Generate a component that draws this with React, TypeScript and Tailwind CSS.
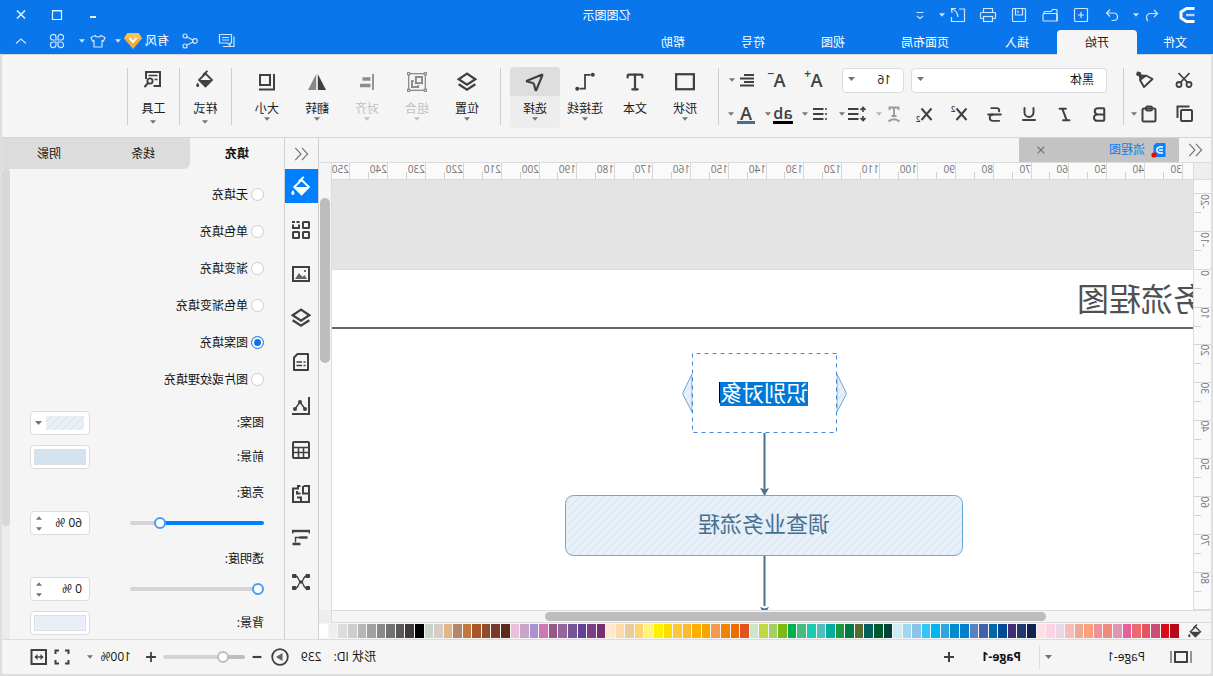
import React, { useState } from "react";
import { Bold, Italic, MousePointer2, Strikethrough, Type, Underline } from "lucide-react";

const menuTabs = ["文件", "开始", "插入", "页面布局", "视图", "符号", "帮助"];
const panelTabs = ["填充", "线条", "阴影"];
const fillModes = ["无填充", "单色填充", "渐变填充", "单色渐变填充", "图案填充", "图片或纹理填充"];

const palette = [
  "#b70817", "#da0a1c", "#c94f76", "#e75460", "#ea6a70", "#e8609b", "#e197b4", "#ee8a82", "#f19099", "#ffa07a",
  "#f0a891", "#f5bebb", "#ebd5e9", "#fed4e4", "#fde0e6", "#0e234d", "#23366f", "#412d75", "#054896", "#0068a6",
  "#4061ac", "#5781c1", "#0080cb", "#008bcf", "#2ea7e0", "#00b6f0", "#31c5f8", "#8bc3eb", "#9fd8f0", "#cfebf6",
  "#004437", "#005830", "#00605c", "#556b2f", "#007a43", "#1c963f", "#00ad9f", "#50bdbf", "#19ccb0", "#4aba80",
  "#00af50", "#7eb911", "#a4cf62", "#c0d842", "#cde6c7", "#e3511f", "#ec6c00", "#f08300", "#f39a52", "#f3a700",
  "#ffaf00", "#feb933", "#fcc838", "#ffdc00", "#fff000", "#fff280", "#ffd371", "#eacc9a", "#ffdbaa", "#fde8d0",
  "#763071", "#7e3e85", "#634198", "#745399", "#95669c", "#9a5687", "#cb79ae", "#aa91d0", "#c6a5c9", "#ebc0dc",
  "#5c2a1b", "#773a2c", "#934b28", "#a85628", "#c1773f", "#b4866b", "#deb887", "#d5ccc7", "#c9d4cb", "#000000",
  "#3e3a39", "#595757", "#727171", "#898989", "#9fa0a0", "#b5b6b6", "#cccdcd", "#dcdcdc", "#eeeeee", "#ffffff",
];

// Pixels covered by ten ruler units
const RULER_STEP = 37.85;
const stepSize = (i: number) => Math.round((i + 1) * RULER_STEP) - Math.round(i * RULER_STEP);

type IconProps = { size?: number; sw?: number; className?: string; children: React.ReactNode };

function Icon({ size = 18, sw = 2, className = "", children }: IconProps) {
  return (
    <svg
      width={size}
      height={size}
      viewBox="0 0 18 18"
      fill="none"
      stroke="currentColor"
      strokeWidth={sw}
      className={`shrink-0 ${className}`}
      aria-hidden="true"
    >
      {children}
    </svg>
  );
}

function Caret({ className = "", up = false }: { className?: string; up?: boolean }) {
  return (
    <svg width="7" height="4" viewBox="0 0 7 4" className={`shrink-0 ${className}`} aria-hidden="true">
      <path d={up ? "M0 4h7L3.5 0z" : "M0 0h7L3.5 4z"} fill="currentColor" />
    </svg>
  );
}

function BucketIcon({ size = 18 }: { size?: number }) {
  return (
    <Icon size={size} sw={1.8}>
      <path d="M6.5 .8 11 5" />
      <path d="M8.5 3.5 15 10 8.5 16.5 2 10z" />
      <path d="M2.5 10h12l-6 6z" fill="currentColor" stroke="none" />
      <path d="M16.2 12.5c1 1.4 1.6 2.2 1.6 3a1.5 1.5 0 0 1-3 0c0-.8.6-1.6 1.4-3z" fill="currentColor" stroke="none" />
    </Icon>
  );
}

function LayersIcon() {
  return (
    <Icon size={20}>
      <path d="M9 1.5 16.500 6.500 9 11.500 1.500 6.500z" />
      <path d="M1.500 11 9 16l7.500-5" />
    </Icon>
  );
}

function ScriptIcon({ y }: { y: number }) {
  return (
    <Icon>
      <path d="M1.500 3.500 11.500 15M11.500 3.500 1.500 15" />
      <text x="12.500" y={y} fontSize="8" fontWeight="600" fill="currentColor" stroke="none">2</text>
    </Icon>
  );
}

function CollapseIcon() {
  return (
    <Icon size={16} sw={1.3} className="text-neutral-500">
      <path d="M8 2 1.500 9 8 16M15.500 2 9 9l6.500 7" />
    </Icon>
  );
}

type ButtonProps = { label: string; className?: string; children: React.ReactNode };

function IconButton({ label, className = "", children }: ButtonProps) {
  return (
    <button aria-label={label} className={`flex items-center justify-center ${className}`}>
      {children}
    </button>
  );
}

function DropButton({ label, className = "", children }: ButtonProps) {
  return (
    <button aria-label={label} className={`flex h-full w-[37px] items-center gap-[2px] ${className}`}>
      <span className="flex w-5 justify-center">{children}</span>
      <Caret className="w-[6px] opacity-70" />
    </button>
  );
}

function Divider() {
  return <div className="mt-[13px] h-[57px] w-px shrink-0 bg-[#cfcfcf]" />;
}

type BigButtonProps = {
  label: string;
  active?: boolean;
  disabled?: boolean;
  tall?: boolean;
  caret?: boolean;
  children: React.ReactNode;
};

function BigButton({ label, active, disabled, tall, caret = true, children }: BigButtonProps) {
  return (
    <button
      disabled={disabled}
      className={`mt-3 flex h-[61px] shrink-0 flex-col items-center rounded-sm ${tall ? "w-[51px]" : "w-[50px]"} ${
        active ? "bg-[#ededed]" : ""
      } ${disabled ? "text-[#c0c0c0]" : "text-[#202020]"}`}
    >
      <span
        className={`flex h-[29px] w-full justify-center rounded-t-sm ${tall ? "pt-[3px]" : "items-center"} ${
          active ? "bg-[#dedede]" : ""
        } ${disabled ? "text-[#8c8c8c]" : "text-[#404040]"}`}
      >
        {children}
      </span>
      <span className="mt-[5px] leading-4">{label}</span>
      {caret && <Caret className={`w-[6px] ${tall ? "mt-[3px]" : ""} ${disabled ? "" : "text-neutral-500"}`} />}
    </button>
  );
}

function TitleBar() {
  return (
    <div className="grid h-[30px] grid-cols-[1fr_auto_1fr] items-center">
      <div className="flex items-center text-white/80">
        <div className="ml-1 flex w-11 justify-center text-white">
          <Icon size={18} sw={3}>
            <path d="M1.500 2.500h8L15 6v6l-5.500 3.500h-8" strokeLinejoin="round" />
            <path d="M1.500 9H10" strokeWidth="2.400" opacity=".7" />
          </Icon>
        </div>
        <button aria-label="撤销" className="ml-1 flex w-[33px] items-center gap-1">
          <Icon size={18} sw={1.2}>
            <path d="M7 4 3.500 7.500 7 11M3.500 7.500H10c3 0 4.500 1.500 4.500 4 0 1.500-.5 2.500-1.500 3.500" />
          </Icon>
          <Caret className="w-[6px]" />
        </button>
        <IconButton label="恢复" className="w-[31px]">
          <Icon sw={1.2}>
            <path d="M11 3.500 14.500 7 11 10.500M14.500 7H8c-3 0-4.500 1.500-4.500 4 0 2 1.500 3.500 4 3.500h2" />
          </Icon>
        </IconButton>
        <IconButton label="新建" className="w-[31px]">
          <Icon sw={1.2}>
            <rect x="2.500" y="2.500" width="13" height="13" rx="1" />
            <path d="M9 6v6M6 9h6" />
          </Icon>
        </IconButton>
        <IconButton label="打开" className="w-[31px]">
          <Icon sw={1.2}>
            <path d="M2 15V4.500A1 1 0 0 1 3 3.500h3.500l1.500 2h6a1 1 0 0 1 1 1V8" />
            <path d="M2 15V9a1.500 1.500 0 0 1 1.500-1.500h11A1.500 1.500 0 0 1 16 9v5a1 1 0 0 1-1 1z" />
          </Icon>
        </IconButton>
        <IconButton label="保存" className="w-[31px]">
          <Icon sw={1.2}>
            <rect x="2.500" y="2.500" width="13" height="13" rx="1" />
            <path d="M5.500 2.500V9h7V2.500M10 4.500v2.500" />
          </Icon>
        </IconButton>
        <IconButton label="打印" className="w-[31px]">
          <Icon sw={1.2}>
            <path d="M4.500 6.500V2.500h9v4M4.500 12.500h-2a1 1 0 0 1-1-1v-4a1 1 0 0 1 1-1h13a1 1 0 0 1 1 1v4a1 1 0 0 1-1 1h-2" />
            <rect x="4.500" y="10.500" width="9" height="5" />
          </Icon>
        </IconButton>
        <button aria-label="导出" className="ml-[6px] flex items-center gap-1">
          <Icon sw={1.2}>
            <path d="M8 3H2.500v12.500h13V11M11 2.500l4.500 0-.5 4.500M15 3c-3.500 1-5.500 3.500-6 8" />
          </Icon>
          <Caret className="w-[6px]" />
        </button>
        <IconButton label="自定义快速访问" className="ml-2 w-[22px]">
          <Icon sw={1.2}>
            <path d="M5.500 6.500h7M6 10l3 2.500 3-2.500" />
          </Icon>
        </IconButton>
      </div>
      <h1 className="pt-px text-white">亿图图示</h1>
      <div className="flex justify-end pr-[3px] text-white/90">
        <IconButton label="最小化" className="w-9">
          <Icon sw={2}><path d="M6 11h6" /></Icon>
        </IconButton>
        <IconButton label="最大化" className="w-9">
          <Icon sw={1.2}><path d="M4.500 4.500h9v9h-9zM4 5h10" /></Icon>
        </IconButton>
        <IconButton label="关闭" className="w-9">
          <Icon sw={1.6}><path d="m5 4.500 8 8M13 4.500l-8 8" /></Icon>
        </IconButton>
      </div>
    </div>
  );
}

function MenuBar() {
  const [tab, setTab] = useState("开始");
  return (
    <div className="flex h-6">
      <nav className="flex">
        {menuTabs.map((name, i) => (
          <button
            key={name}
            onClick={() => setTab(name)}
            className={`h-[25px] pt-px leading-6 ${i === 0 ? "px-[26px]" : "px-7"} ${
              tab === name ? "relative z-10 rounded-t-sm bg-[#f5f5f5] text-[#202020]" : "text-white"
            }`}
          >
            {name}
          </button>
        ))}
      </nav>
      <div className="ml-auto flex h-[22px] items-center pr-[3px] text-white/80">
        <IconButton label="评论" className="w-[37px]">
          <Icon sw={1.2}>
            <path d="M4.500 2.500h12v8.500h-8L6 13.500V11H4.500zM7 5.500h7M7 8h7M2 4.500v10h11" />
          </Icon>
        </IconButton>
        <IconButton label="分享" className="w-[37px]">
          <Icon sw={1.2}>
            <circle cx="4" cy="9" r="2.300" />
            <circle cx="14" cy="4" r="2" />
            <circle cx="14" cy="14" r="2" />
            <path d="m6 8 6-3M6 10l6 3" />
          </Icon>
        </IconButton>
        <button className="ml-[2px] flex items-center text-white">
          有风
          <svg width="20" height="18" viewBox="0 0 20 18" className="ml-[2px]" aria-hidden="true">
            <path d="M4.500 1h11L19 6.500 10 17 1 6.500z" fill="#f5ad3a" />
            <path d="M4.500 1h11L19 6.500H1z" fill="#fabf55" />
            <path d="M6.500 6 10 10l3.500-4" fill="none" stroke="#fff" strokeWidth="2" />
          </svg>
          <Caret className="ml-[2px] w-[6px] opacity-80" />
        </button>
        <button aria-label="主题" className="ml-2 flex items-center gap-1">
          <Icon sw={1.2}>
            <path d="M6 3.500 2 5.500l1.500 3.500 1.500-.5V15h8V8.500l1.500.5L16 5.500 12 3.500c-.5 2-5.500 2-6 0z" />
          </Icon>
          <Caret className="w-[6px]" />
        </button>
        <IconButton label="应用" className="ml-1 w-9">
          <Icon sw={1.2}>
            <path d="M8 8V5.200A2.800 2.800 0 1 0 5.200 8zM10 8h2.800A2.800 2.800 0 1 0 10 5.200zM8 10H5.200A2.800 2.800 0 1 0 8 12.800zM10 10v2.800A2.800 2.800 0 1 0 12.800 10z" />
          </Icon>
        </IconButton>
        <IconButton label="收起功能区" className="w-9">
          <Icon sw={1.2}><path d="m4 11.500 5-4.500 5 4.500" /></Icon>
        </IconButton>
      </div>
    </div>
  );
}

function Toolbar() {
  return (
    <div className="flex h-[84px] shrink-0 overflow-hidden border-y border-[#d4d4d4] text-[#404040]">
      <div className="ml-[9px] flex w-[78px] shrink-0 flex-col pt-2">
        <div className="flex h-[34px]">
          <IconButton label="剪切" className="w-9">
            <Icon sw={1.8}>
              <circle cx="4" cy="13.500" r="2.500" />
              <circle cx="14" cy="13.500" r="2.500" />
              <path d="M3.500 2 12.500 11.500M14.500 2 5.500 11.500" />
            </Icon>
          </IconButton>
          <IconButton label="格式刷" className="w-11">
            <Icon sw={1.9}>
              <path d="M1.500 8 8 4.500l6 4.500-4 7z" strokeLinejoin="round" />
              <path d="M7.500 4 14.500 9.500 15 5.500 18 4 17 .5 13.500 1 12.500 3.500z" fill="currentColor" stroke="none" />
            </Icon>
          </IconButton>
        </div>
        <div className="flex h-[34px]">
          <IconButton label="复制" className="w-9">
            <Icon>
              <rect x="2" y="5" width="11" height="11" rx="1" />
              <path d="M4.500 1.500H16.500V13" />
            </Icon>
          </IconButton>
          <DropButton label="粘贴" className="ml-2">
            <Icon>
              <rect x="2.500" y="3.500" width="13" height="13" rx="1.500" />
              <rect x="6" y="1.500" width="6" height="4" rx="1.500" />
            </Icon>
          </DropButton>
        </div>
      </div>
      <Divider />
      <div className="ml-[6px] flex shrink-0 flex-col pt-2">
        <div className="flex h-[34px] items-center pl-[10px]">
          <div className="relative w-[196px]">
            <select aria-label="字体" className="h-[25px] w-full appearance-none rounded-sm border border-[#dcdce0] bg-white px-3 text-[#111]">
              <option>黑体</option>
            </select>
            <Caret className="pointer-events-none absolute top-[9px] right-[6px] text-neutral-500" />
          </div>
          <div className="relative ml-[7px] w-[62px]">
            <select aria-label="字号" className="h-[25px] w-full appearance-none rounded-sm border border-[#dcdce0] bg-white px-3 text-[#111]">
              <option>16</option>
            </select>
            <Caret className="pointer-events-none absolute top-[9px] right-[6px] text-neutral-500" />
          </div>
          <button aria-label="增大字号" className="relative ml-[7px] w-[37px] text-lg leading-6 font-semibold">
            A<sup className="absolute top-0 right-[6px] text-xs leading-3">+</sup>
          </button>
          <button aria-label="减小字号" className="relative w-[37px] text-lg leading-6 font-semibold">
            A<sup className="absolute top-0 right-[6px] text-xs leading-3">−</sup>
          </button>
          <DropButton label="对齐方式" className="ml-1">
            <Icon sw={1.8}><path d="M2 4h10M2 7.500h14M2 11h10M2 14.500h14" /></Icon>
          </DropButton>
        </div>
        <div className="flex h-[34px] items-center">
          <IconButton label="加粗" className="w-[35px]"><Bold size={19} strokeWidth={2.6} /></IconButton>
          <IconButton label="斜体" className="w-[35px]"><Italic size={17} strokeWidth={2.8} /></IconButton>
          <IconButton label="下划线" className="w-[35px]"><Underline size={18} strokeWidth={2.6} /></IconButton>
          <IconButton label="删除线" className="w-[35px]"><Strikethrough size={19} strokeWidth={2.4} /></IconButton>
          <IconButton label="上标" className="w-[35px]"><ScriptIcon y={7} /></IconButton>
          <IconButton label="下标" className="w-[35px]"><ScriptIcon y={17} /></IconButton>
          <DropButton label="文字路径" className="ml-[3px] text-[#9a9a9a]">
            <Icon sw={1.8}><path d="M4.500 5V2.500h9V5M9 2.500V11M6.500 11h5M3.500 16.500c3-3 8-3 11 0" /></Icon>
          </DropButton>
          <DropButton label="行距">
            <Icon sw={1.6}>
              <path d="M3 2.500v4.500M.5 5 3 2.500 5.500 5M3 11v4.500M.5 13 3 15.500 5.500 13" />
              <path d="M7.500 4H18M7.500 9H18M7.500 14H18" strokeWidth="2" />
            </Icon>
          </DropButton>
          <DropButton label="项目符号">
            <Icon>
              <path d="M5.500 4H16M5.500 9H16M5.500 14H16" />
              <path d="M2 4h2M2 9h2M2 14h2" strokeWidth="1.500" />
            </Icon>
          </DropButton>
          <DropButton label="突出显示">
            <span className="border-b-[3px] border-black text-base leading-4 font-semibold">ab</span>
          </DropButton>
          <DropButton label="字体颜色">
            <span className="w-[18px] border-b-[3px] border-[#46708f] text-lg leading-4 font-semibold">A</span>
          </DropButton>
        </div>
      </div>
      <Divider />
      <div className="ml-2 flex shrink-0">
        <BigButton label="形状">
          <Icon size={20}><rect x="1" y="2" width="16" height="13.500" /></Icon>
        </BigButton>
        <BigButton label="文本" caret={false}>
          <Type size={22} strokeWidth={2.4} />
        </BigButton>
        <BigButton label="连接线">
          <Icon size={20}>
            <circle cx="2" cy="2.500" r="1.800" fill="currentColor" stroke="none" />
            <circle cx="16" cy="15" r="1.800" fill="currentColor" stroke="none" />
            <path d="M4 2.500h5V15h5" strokeWidth="1.600" />
          </Icon>
        </BigButton>
        <BigButton label="选择" active>
          <MousePointer2 size={22} strokeWidth={2.4} />
        </BigButton>
      </div>
      <div className="ml-[9px] flex"><Divider /></div>
      <div className="ml-2 flex shrink-0">
        <BigButton label="位置"><LayersIcon /></BigButton>
        <BigButton label="组合" disabled>
          <Icon size={20} sw={1.2}>
            <rect x="1.500" y="1.500" width="15" height="15" />
            <g fill="#f5f5f5">
              <circle cx="1.500" cy="1.500" r="1.200" />
              <circle cx="16.500" cy="1.500" r="1.200" />
              <circle cx="1.500" cy="16.500" r="1.200" />
              <circle cx="16.500" cy="16.500" r="1.200" />
            </g>
            <rect x="4.500" y="4.500" width="5.500" height="5.500" strokeWidth="1.800" />
            <path d="M12 8h1.500v5.500H8V12" strokeWidth="1.800" />
          </Icon>
        </BigButton>
        <BigButton label="对齐" disabled>
          <Icon>
            <path d="M3 1v16" strokeWidth="1.800" />
            <path d="M5.500 6h8M5.500 12.500H16" strokeWidth="3.500" />
          </Icon>
        </BigButton>
        <BigButton label="翻转">
          <Icon>
            <path d="M8.200 1v16H0z" fill="currentColor" stroke="none" />
            <path d="M9.800 1v16H18z" fill="#888" stroke="none" />
          </Icon>
        </BigButton>
        <BigButton label="大小">
          <Icon>
            <rect x="6" y="2" width="10" height="10" />
            <path d="M2 1v15.500h15" />
          </Icon>
        </BigButton>
      </div>
      <div className="ml-[10px] flex shrink-0">
        <Divider />
        <BigButton label="样式" tall><BucketIcon size={18} /></BigButton>
        <Divider />
        <BigButton label="工具" tall>
          <Icon>
            <path d="M8.500 16H2V2h14v7" />
            <path d="M4.500 5.500h9M4.500 9.500h3" strokeWidth="1.500" />
            <circle cx="12" cy="11" r="2.600" strokeWidth="1.800" />
            <path d="m14 13 3.500 4" />
          </Icon>
        </BigButton>
        <Divider />
      </div>
    </div>
  );
}

function HorizontalRuler() {
  return (
    <div className="flex min-w-0 overflow-hidden border-b border-[#dcdcdc] bg-[#fafafa] pl-[10px]">
      {Array.from({ length: 23 }, (_, i) => (
        <div key={i} className="flex shrink-0 items-end border-l border-[#d8d8d8]" style={{ width: stepSize(i) }}>
          <span className="w-[18px] self-start text-[10px] leading-3 text-neutral-500">{30 + i * 10}</span>
          <span className="h-[7px] w-px bg-[#d0d0d0]" />
        </div>
      ))}
    </div>
  );
}

function VerticalRuler() {
  return (
    <div className="flex min-h-0 flex-col overflow-hidden border-r border-b border-[#dcdcdc] bg-[#fafafa] pt-[13px]">
      {Array.from({ length: 11 }, (_, i) => (
        <div key={i} className="flex shrink-0 flex-col border-t border-[#d8d8d8]" style={{ height: stepSize(i) }}>
          <span className="flex h-[18px] rotate-180 items-center justify-end pl-1 text-[10px] leading-3 text-neutral-500 [writing-mode:vertical-rl]">
            {-20 + i * 10}
          </span>
          <span className="h-px w-[7px] shrink-0 self-end bg-[#d0d0d0]" />
        </div>
      ))}
    </div>
  );
}

function Canvas() {
  return (
    <div className="relative min-h-0 min-w-0 overflow-hidden bg-[#e4e4e4]">
      <div className="absolute inset-x-0 top-[89px] bottom-0 border-t border-[#dcdcdc] bg-white" />
      <h2 className="absolute top-[99px] left-[-44px] text-[32px] leading-10 whitespace-nowrap text-[#505050]">
        业务流程图
      </h2>
      <div className="absolute inset-x-0 top-[147px] h-[2px] bg-[#6b6664]" />
      <svg className="absolute inset-0 size-full" aria-hidden="true">
        <defs>
          <pattern id="hatch" width="8" height="8" patternUnits="userSpaceOnUse">
            <rect width="8" height="8" fill="#e9eff7" />
            <path d="M-1-1l10 10M-1 7l2 2M7-1l2 2" stroke="#cddfee" strokeWidth=".8" />
          </pattern>
        </defs>
        <path d="M356 194 346.500 213.500 356 232zM501 194l9.500 19.500L501 232z" fill="url(#hatch)" stroke="#69a8d8" />
        <rect x="356.500" y="173.500" width="144" height="79" fill="#fff" stroke="#3f87d8" strokeDasharray="4 4" />
        <path d="M428.500 253v58M428.500 376v50" stroke="#4a7190" strokeWidth="2" />
        <path d="M424 308l4.500 1.500 4.500-1.500-4.500 8zM424 427l4.500 1.500 4.500-1.500-4.500 8z" fill="#4a7190" />
        <rect x="230.500" y="315.500" width="397" height="60" rx="8" fill="url(#hatch)" stroke="#69a8d8" />
      </svg>
      <div className="absolute top-[202px] left-[385px] h-6 bg-[#0078d7] text-[22px] leading-5 whitespace-nowrap text-white">
        识别对象
        <span className="absolute top-0 -right-px h-[21px] w-px bg-black" />
      </div>
      <div className="absolute top-[315px] left-[230px] flex h-[58px] w-[398px] items-center justify-center text-[22px] text-[#46708f]">
        调查业务流程
      </div>
    </div>
  );
}

function Workspace() {
  return (
    <div className="flex min-w-0 flex-1 flex-col">
      <div className="flex h-[25px] shrink-0 border-b border-[#dcdcdc]">
        <IconButton label="展开符号库" className="w-8"><CollapseIcon /></IconButton>
        <div className="flex w-[160px] items-center bg-[#c3c3c3] pl-3 text-[#0a7cf0]">
          <svg width="16" height="16" viewBox="0 0 16 16" className="mr-[6px]" aria-hidden="true">
            <path d="M1.500 1H11l2.500 2.500V15h-12z" fill="#0a80ff" />
            <path d="M4 5h3.500L10 6.500v3L7.500 11H4M4 8h4" fill="none" stroke="#fff" strokeWidth="1.500" />
            <circle cx="13" cy="13" r="2.600" fill="#f00" />
          </svg>
          流程图
          <button aria-label="关闭页签" className="mr-[14px] ml-auto text-neutral-500">
            <Icon size={15} sw={1.4}><path d="m4.500 4.500 8 8M12.500 4.500l-8 8" /></Icon>
          </button>
        </div>
      </div>
      <div className="flex min-h-0 flex-1">
        <div className="grid min-w-0 flex-1 grid-cols-[18px_minmax(0,1fr)] grid-rows-[17px_minmax(0,1fr)]">
          <div className="border-r border-b border-[#dcdcdc] bg-[#eee]" />
          <HorizontalRuler />
          <VerticalRuler />
          <Canvas />
        </div>
        <div className="w-[13px] border-l border-[#dcdcdc] px-px pt-[35px]">
          <div className="h-[165px] rounded-full bg-[#bdbdbd]" />
        </div>
      </div>
      <div className="flex h-[13px] shrink-0">
        <div className="flex-1 border-y border-r border-[#dcdcdc] pt-px">
          <div className="ml-[165px] h-[9px] w-[57%] rounded-full bg-[#bdbdbd]" />
        </div>
        <div className="w-3 bg-[#eee]" />
      </div>
      <div className="flex h-4 shrink-0 pr-px">
        <IconButton label="填充颜色" className="w-8 text-[#404040]"><BucketIcon size={14} /></IconButton>
        <div className="flex flex-1 gap-px py-px">
          {palette.map((color) => (
            <button key={color} aria-label={color} className="flex-1" style={{ backgroundColor: color }} />
          ))}
        </div>
      </div>
    </div>
  );
}

const railIcons = [
  { name: "填充", icon: <BucketIcon size={20} /> },
  {
    name: "符号库",
    icon: (
      <Icon>
        <rect x="1" y="1" width="6" height="6" rx=".5" />
        <path d="M11 3.500V7h6V3.500M10.500 1h3M15 1h3" />
        <rect x="1" y="11" width="6" height="6" rx=".5" />
        <rect x="11" y="11" width="6" height="6" rx=".5" />
      </Icon>
    ),
  },
  {
    name: "图片",
    icon: (
      <Icon>
        <rect x="1" y="2" width="16" height="14" />
        <path d="m3 14 2.500-4 2 2L11 8l4 6z" fill="currentColor" opacity=".8" stroke="none" />
        <circle cx="5" cy="6" r="1" fill="currentColor" stroke="none" />
      </Icon>
    ),
  },
  { name: "图层", icon: <LayersIcon /> },
  {
    name: "文档",
    icon: (
      <Icon>
        <path d="M2 1h10.500L16 4.500V17H2z" strokeLinejoin="round" />
        <path d="M4.500 9h2M8 9h5.500M4.500 12.500h2M8 12.500h5.500" strokeWidth="1.600" />
      </Icon>
    ),
  },
  {
    name: "图表",
    icon: (
      <Icon>
        <path d="M1 0v17h17" />
        <path d="m5 12 5-7 5 7" strokeWidth="1.400" />
        <circle cx="5" cy="12" r="2" fill="currentColor" stroke="none" />
        <circle cx="10" cy="5" r="2" fill="currentColor" stroke="none" />
        <circle cx="15" cy="12" r="2" fill="currentColor" stroke="none" />
      </Icon>
    ),
  },
  {
    name: "表格",
    icon: (
      <Icon>
        <rect x="1" y="1" width="16" height="16" rx="1" />
        <path d="M1 6.500h16M1 11.500h16M6.500 6.500V17M11.500 6.500V17" strokeWidth="1.600" />
      </Icon>
    ),
  },
  {
    name: "平面图",
    icon: (
      <Icon>
        <path d="M6.500 1H1v16h16V3.500h-5V1H9.500M7 1v7.500H1M9.500 8.500H13V6M9 17v-4.500h4" />
      </Icon>
    ),
  },
  {
    name: "甘特图",
    icon: (
      <Icon>
        <path d="M0 2h18" strokeWidth="2.400" />
        <path d="M.700 2v2.500M17.300 2v2.500" strokeWidth="1.400" />
        <path d="M2.500 8.500h8M9.500 15h8" strokeWidth="2.600" />
        <path d="M10 8.500h4.500v5" strokeWidth="1.400" />
      </Icon>
    ),
  },
  {
    name: "思维导图",
    icon: (
      <Icon>
        <path d="M3 3c5 0 2.500 6 6 6s1-6 6-6M3 15c5 0 2.500-6 6-6s1 6 6 6" strokeWidth="1.300" />
        <g fill="currentColor" stroke="none">
          <rect x="0" y="1" width="4.500" height="4" rx="1" />
          <rect x="13.500" y="1" width="4.500" height="4" rx="1" />
          <rect x="0" y="13" width="4.500" height="4" rx="1" />
          <rect x="13.500" y="13" width="4.500" height="4" rx="1" />
          <rect x="7" y="7.500" width="4" height="3" rx="1" />
        </g>
      </Icon>
    ),
  },
];

function Rail() {
  return (
    <div className="flex w-[34px] shrink-0 flex-col overflow-hidden border-l border-[#d0d0d0] text-[#404040]">
      <IconButton label="收起面板" className="h-[31px] shrink-0"><CollapseIcon /></IconButton>
      <div className="flex flex-col gap-[10px]">
        {railIcons.map(({ name, icon }, i) => (
          <IconButton key={name} label={name} className={`h-[34px] shrink-0 ${i === 0 ? "bg-[#0080ff] text-white" : ""}`}>
            {icon}
          </IconButton>
        ))}
      </div>
    </div>
  );
}

type RangeProps = {
  label: string;
  min?: number;
  max?: number;
  value: number;
  onChange: (value: number) => void;
  fill?: string;
  className?: string;
};

function Range({ label, min = 0, max = 100, value, onChange, fill = "#0080ff", className = "" }: RangeProps) {
  const percent = ((value - min) / (max - min)) * 100;
  return (
    <input
      type="range"
      aria-label={label}
      min={min}
      max={max}
      value={value}
      onChange={(e) => onChange(Number(e.target.value))}
      className={`h-1 appearance-none rounded-full [&::-webkit-slider-thumb]:size-3 [&::-webkit-slider-thumb]:appearance-none [&::-webkit-slider-thumb]:rounded-full [&::-webkit-slider-thumb]:border-2 [&::-webkit-slider-thumb]:bg-white ${className}`}
      style={{ background: `linear-gradient(to right, ${fill} ${percent}%, #d4d4d4 ${percent}%)` }}
    />
  );
}

type SliderRowProps = { label: string; min?: number; value: number; onChange: (value: number) => void };

function SliderRow({ label, min, value, onChange }: SliderRowProps) {
  return (
    <div className="mt-4">
      <div className="leading-4">{label}:</div>
      <div className="mt-[10px] flex items-center justify-between">
        <Range
          label={label}
          min={min}
          value={value}
          onChange={onChange}
          className="w-[134px] [&::-webkit-slider-thumb]:border-[#4a9cf5]"
        />
        <div className="flex h-6 w-[60px] items-center rounded-sm border border-[#dcdcdc] bg-white pr-[5px]">
          <input
            aria-label={`${label}数值`}
            value={`${value} %`}
            onChange={(e) => onChange(parseInt(e.target.value) || 0)}
            className="w-11 min-w-0 pl-[7px]"
          />
          <div className="ml-auto flex flex-col gap-[7px] text-neutral-500">
            <button aria-label={`增加${label}`} onClick={() => onChange(value + 1)}><Caret up className="w-[6px]" /></button>
            <button aria-label={`减少${label}`} onClick={() => onChange(value - 1)}><Caret className="w-[6px]" /></button>
          </div>
        </div>
      </div>
    </div>
  );
}

function FillPanel() {
  const [mode, setMode] = useState("图案填充");
  const [brightness, setBrightness] = useState(60);
  const [opacity, setOpacity] = useState(0);

  return (
    <aside className="flex w-[283px] shrink-0 flex-col overflow-hidden border-l border-[#d0d0d0] text-[#111]">
      <div className="flex h-[31px] shrink-0">
        {panelTabs.map((name, i) => (
          <button
            key={name}
            className={`flex-1 ${i === 0 ? "font-bold" : "bg-[#dcdcdc]"} ${i === 1 ? "rounded-bl-md" : ""}`}
          >
            {name}
          </button>
        ))}
      </div>
      <div className="flex min-h-0 flex-1 overflow-hidden">
        <div className="flex-1 px-5 pt-[7px]">
          {fillModes.map((name) => (
            <label key={name} className="flex h-[37px] items-center gap-[3px]">
              <input
                type="radio"
                name="fill"
                checked={mode === name}
                onChange={() => setMode(name)}
                className="size-[13px] appearance-none rounded-full border border-[#cdcdcd] bg-white checked:border-[#2b88ee] checked:bg-[#0a76ec] checked:shadow-[inset_0_0_0_2px_white]"
              />
              {name}
            </label>
          ))}
          <div className="mt-[13px] flex h-6 items-center justify-between">
            图案:
            <button aria-label="图案" className="flex h-6 w-[60px] items-center gap-1 rounded-sm border border-[#dcdcdc] bg-white pl-[5px]">
              <svg width="38" height="14" className="shrink-0" aria-hidden="true">
                <rect width="38" height="14" fill="url(#hatch)" />
              </svg>
              <Caret className="text-neutral-500" />
            </button>
          </div>
          <div className="mt-[10px] flex h-6 items-center justify-between">
            前景:
            <button aria-label="前景" className="h-6 w-[60px] rounded-sm border border-[#dcdcdc] bg-white p-[3px]">
              <span className="block h-full border border-[#dcdfe3] bg-[#d5e2f0]" />
            </button>
          </div>
          <SliderRow label="亮度" min={-100} value={brightness} onChange={setBrightness} />
          <SliderRow label="透明度" value={opacity} onChange={setOpacity} />
          <div className="mt-[10px] flex h-6 items-center justify-between">
            背景:
            <button aria-label="背景" className="h-6 w-[60px] rounded-sm border border-[#dcdcdc] bg-white p-[3px]">
              <span className="block h-full border border-[#dcdfe3] bg-[#e9eff8]" />
            </button>
          </div>
        </div>
        <div className="w-2 shrink-0 bg-[#ececec]">
          <div className="h-[76%] rounded-full bg-[#d8d8d8]" />
        </div>
      </div>
    </aside>
  );
}

function StatusBar() {
  const [zoom, setZoom] = useState(23);
  return (
    <footer className="flex h-[35px] shrink-0 items-center border-t border-[#dcdcdc] text-[#111]">
      <IconButton label="页面视图" className="ml-[18px] w-6 text-[#404040]">
        <svg width="22" height="14" viewBox="0 0 22 14" fill="none" stroke="currentColor" aria-hidden="true">
          <rect x="5" y="2" width="12" height="10" strokeWidth="2" />
          <path d="M1 1v12M21 1v12" strokeWidth="1.500" opacity=".7" />
        </svg>
      </IconButton>
      <div className="relative ml-6 w-[102px]">
        <select aria-label="页面" className="w-full appearance-none">
          <option>Page-1</option>
        </select>
        <Caret className="pointer-events-none absolute top-[6px] right-[2px] text-neutral-500" />
      </div>
      <div className="ml-[3px] h-6 w-px bg-[#dcdcdc]" />
      <button className="ml-[18px] font-bold">Page-1</button>
      <IconButton label="添加页面" className="ml-6 text-[#404040]">
        <Icon><path d="M9 4v10M4 9h10" /></Icon>
      </IconButton>
      <div className="ml-auto flex items-center pr-7 text-[#404040]">
        <span className="text-[#111]">形状 ID:<span className="ml-3">239</span></span>
        <IconButton label="演示" className="ml-3">
          <Icon>
            <circle cx="9" cy="9" r="7.800" strokeWidth="1.800" />
            <path d="M6.500 5v8l6.500-4z" fill="currentColor" stroke="none" opacity=".8" />
          </Icon>
        </IconButton>
        <IconButton label="缩小" className="ml-[6px]">
          <Icon size={16}><path d="M4 9h10" strokeWidth="2.400" /></Icon>
        </IconButton>
        <Range
          label="缩放"
          value={zoom}
          onChange={setZoom}
          fill="#bdbdbd"
          className="ml-1 w-[82px] [&::-webkit-slider-thumb]:border-[#bdbdbd]"
        />
        <IconButton label="放大" className="ml-1">
          <Icon size={16}><path d="M9 3.500v11M3.500 9h11" /></Icon>
        </IconButton>
        <div className="relative ml-3 w-11 text-[#111]">
          <select aria-label="缩放比例" className="w-full appearance-none">
            <option>100%</option>
          </select>
          <Caret className="pointer-events-none absolute top-[6px] right-0 w-[6px] text-neutral-500" />
        </div>
        <IconButton label="全屏" className="ml-4">
          <Icon><path d="M2.500 6V2.500H6M12 2.500h3.500V6M15.500 12v3.500H12M6 15.500H2.500V12" /></Icon>
        </IconButton>
        <IconButton label="适合宽度" className="ml-[5px]">
          <Icon>
            <rect x="2" y="2" width="14.500" height="14" />
            <path d="M5 9h8" strokeWidth="1.400" />
            <path d="M4.500 9 7.500 6v6zM13.500 9l-3-3v6z" fill="currentColor" stroke="none" />
          </Icon>
        </IconButton>
      </div>
    </footer>
  );
}

export default function App() {
  return (
    <div className="flex h-screen min-w-0 -scale-x-100 flex-col overflow-hidden bg-[#f5f5f5] font-['Open_Sans','Noto_Sans_CJK_SC',sans-serif] text-xs">
      <header className="shrink-0 bg-[#0976eb]">
        <TitleBar />
        <MenuBar />
      </header>
      <div className="flex min-h-0 flex-1 flex-col border-x-2 border-b-2 border-[#dedede]">
        <Toolbar />
        <main className="flex min-h-0 flex-1">
          <Workspace />
          <Rail />
          <FillPanel />
        </main>
        <StatusBar />
      </div>
    </div>
  );
}
